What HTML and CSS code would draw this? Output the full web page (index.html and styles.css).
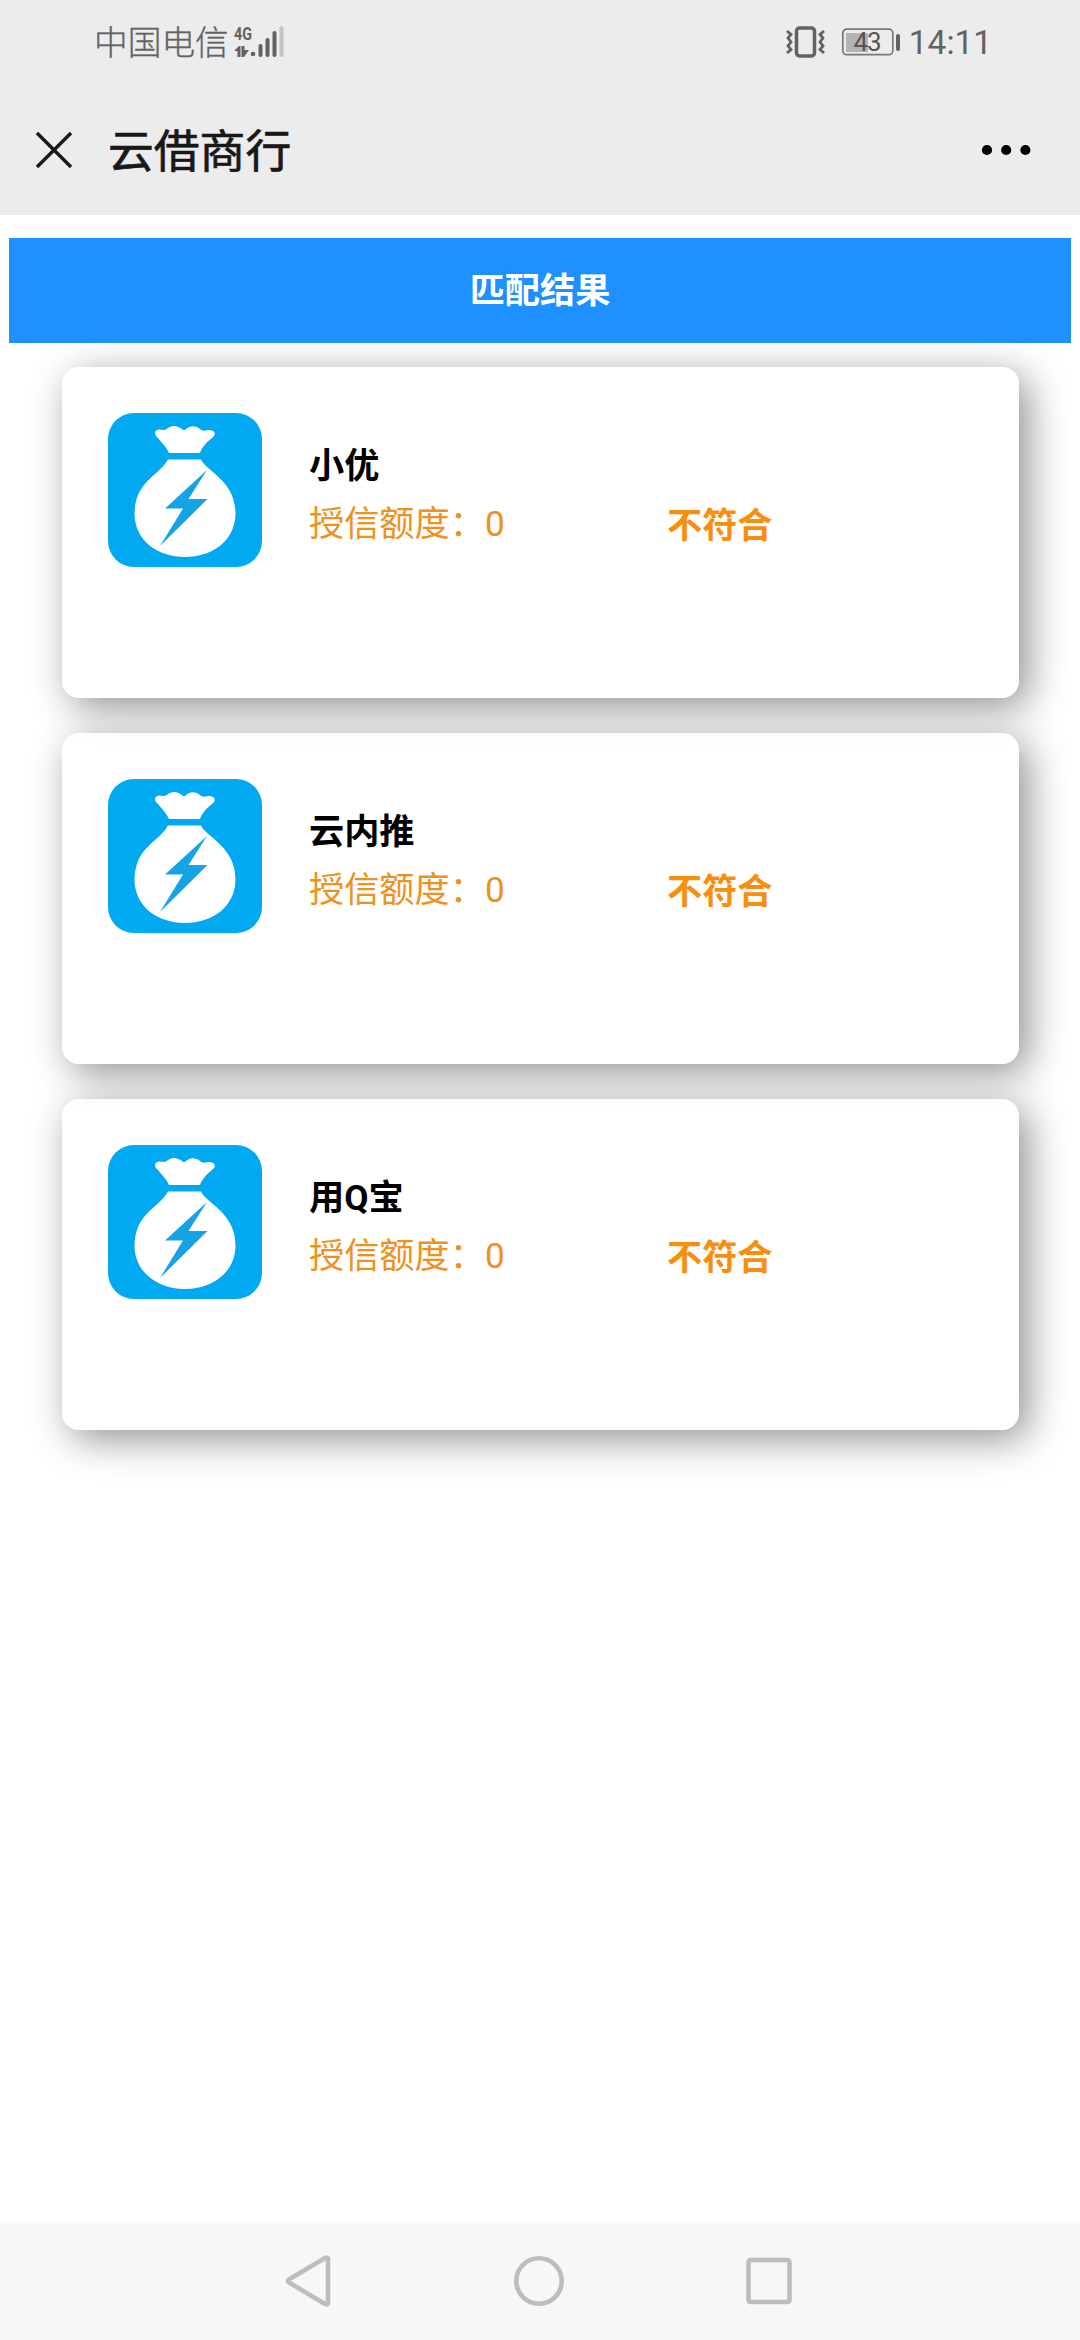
FILE: index.html
```html
<!DOCTYPE html>
<html lang="zh-CN">
<head>
<meta charset="utf-8">
<title>云借商行</title>
<link rel="stylesheet" href="styles.css">
</head>
<body>
<svg class="defs" aria-hidden="true">
  <symbol id="bag" viewBox="0 0 154 154">
    <rect width="154" height="154" rx="26" fill="#00a9f0"/>
    <path fill="#fff" d="M61 40C59 35 54 30 50 25C46 22 46 17 51 16.500C54 16.500 57 18 60 15C65 11.500 70 12.500 76 17.500C82 12 87 12 92 16C95 19 98 17 102 17C108 18 108 22 104 25C98 30 94 34 92 40Z"/>
    <path fill="#fff" d="M60 46.500H93C98 58 128 68 127.500 101C127 128 104 144 77 144C50 144 27 128 26.500 101C27 68 50 64 60 46.500Z"/>
    <path fill="#16a3e6" d="M99 57L57 95.500H75L52 133L99.500 86H80.500Z"/>
  </symbol>
</svg>
<div class="screen">
  <header class="top">
    <div class="status">
      <span class="carrier">中国电信</span>
      <svg class="signal" width="52" height="42" viewBox="0 -4 52 42" fill="#626262">
        <text class="net" x="0" y="15" textLength="18" lengthAdjust="spacingAndGlyphs">4G</text>
        <path d="M0 26L5 21H6.500V32H3.500V26ZM7.500 21H10.500V25H15L10 32H7.500Z"/>
        <circle cx="19" cy="29" r="2.300"/>
        <rect x="24.500" y="19" width="4" height="13" rx="2"/>
        <rect x="31.500" y="13" width="4" height="19" rx="2"/>
        <rect x="38.500" y="6" width="4" height="26" rx="2"/>
        <rect x="45.500" y="1" width="4" height="31" rx="2" fill="#c4c4c4"/>
      </svg>
      <svg class="vibrate" width="42" height="34" viewBox="0 0 42 34" fill="none" stroke="#626262">
        <rect x="11.500" y="3" width="18" height="28" rx="3" stroke-width="3.500"/>
        <path d="M2 6L6 9.500L3 13L6 17L3 21L6 24.500L2 28M39 6L35 9.500L38 13L35 17L38 21L35 24.500L39 28" stroke-width="2.800"/>
      </svg>
      <svg class="battery" width="60" height="30" viewBox="0 0 60 30">
        <rect x="1.800" y="2.200" width="50" height="25.500" rx="4" fill="none" stroke="#777" stroke-width="1.700"/>
        <rect x="5" y="6" width="22" height="19" fill="#b4b4b4"/>
        <rect x="55" y="7" width="4" height="17" rx="2" fill="#626262"/>
        <text class="charge" x="12.500" y="23.500" textLength="28">43</text>
      </svg>
      <span class="clock">14:11</span>
    </div>
    <div class="bar">
      <svg class="close" width="38" height="38" viewBox="0 0 38 38"><path d="M2 2L36 36M36 2L2 36" stroke="#181818" stroke-width="3.400"/></svg>
      <h1 class="title">云借商行</h1>
      <svg class="more" width="50" height="12" viewBox="0 0 50 12"><circle cx="6" cy="6" r="5.100"/><circle cx="25.200" cy="6" r="5.100"/><circle cx="44.400" cy="6" r="5.100"/></svg>
    </div>
  </header>
  <main class="content">
    <h2 class="banner">匹配结果</h2>
    <section class="cards">
      <article class="card">
        <svg class="logo"><use href="#bag"/></svg>
        <div class="info"><h3 class="name">小优</h3><p class="limit">授信额度：0</p></div>
        <strong class="verdict">不符合</strong>
      </article>
      <article class="card">
        <svg class="logo"><use href="#bag"/></svg>
        <div class="info"><h3 class="name">云内推</h3><p class="limit">授信额度：0</p></div>
        <strong class="verdict">不符合</strong>
      </article>
      <article class="card">
        <svg class="logo"><use href="#bag"/></svg>
        <div class="info"><h3 class="name">用Q宝</h3><p class="limit">授信额度：0</p></div>
        <strong class="verdict">不符合</strong>
      </article>
    </section>
  </main>
  <nav class="nav">
    <svg width="50" height="54" viewBox="0 0 50 54"><path d="M44 4.500V49.500Q43 51 41 50L5 28.500Q3 27 5 25.500L41 4Q43 3 44 4.500Z"/></svg>
    <svg width="54" height="54" viewBox="0 0 54 54"><circle cx="27" cy="27" r="22.700"/></svg>
    <svg width="50" height="54" viewBox="0 0 50 54"><rect x="4.500" y="6" width="41" height="42" rx="2"/></svg>
  </nav>
</div>
</body>
</html>
```

FILE: styles.css
```css
* { box-sizing: border-box; }
body { margin: 0; background: #fff; font-family: Roboto, "Noto Sans CJK SC", sans-serif; }
h1, h2, h3, p { margin: 0; }
svg { display: block; flex: none; }
.defs { display: none; }
.screen { width: 1080px; height: 2340px; display: flex; flex-direction: column; overflow: hidden; }

.top { height: 215px; background: #ececec; flex: none; }
.status { height: 84px; display: flex; align-items: center; padding: 0 88px 0 94px; color: #626262; }
.carrier { font-size: 33.700px; line-height: 50px; font-weight: 300; padding-top: 4px; -webkit-text-stroke: .3px #626262; }
.signal { margin-left: 5px; }
.net { font: 700 18.500px Roboto, sans-serif; }
.vibrate { margin-left: auto; }
.battery { margin-left: 14px; }
.charge { font: 400 26px Roboto, sans-serif; fill: #555; }
.clock { margin-left: 8px; font-size: 33.400px; line-height: 50px; padding-top: 2px; }

.bar { height: 131px; padding: 0 49px 0 35px; display: flex; align-items: center; }
.title { margin-left: 35px; padding-top: 6px; font-size: 45.800px; line-height: 66px; font-weight: 400; color: #181818; -webkit-text-stroke: .7px #181818; }
.more { margin-left: auto; }

.content { flex: 1; padding: 23px 9px 0; }
.banner { height: 105px; padding-top: 1px; background: #1e90ff; color: #fff; font-size: 35.200px; line-height: 105px; font-weight: 700; text-align: center; }
.cards { display: flex; flex-direction: column; gap: 35px; padding: 24px 52.500px 0 53px; }
.card { height: 331px; display: flex; align-items: flex-start; padding: 46px; border-radius: 17px; background: rgba(255, 255, 255, .6); box-shadow: 9px 9px 39px #919191; }
.logo { width: 154px; height: 154px; }
.info { width: 358px; margin-left: 47px; padding-top: 24px; }
.name { font-size: 35.200px; line-height: 58px; font-weight: 700; color: #000; }
.limit { font-size: 35.200px; line-height: 58px; color: #ed9220; font-weight: 400; }
.verdict { padding-top: 84px; font-size: 35.200px; line-height: 58px; font-weight: 700; color: #f98e0c; }

.nav { height: 118px; flex: none; background: #f7f7f7; display: flex; justify-content: space-between; align-items: center; padding: 0 286px 0 284px; }
.nav svg { fill: none; stroke: #bdbdbd; stroke-width: 4.600; }
```
